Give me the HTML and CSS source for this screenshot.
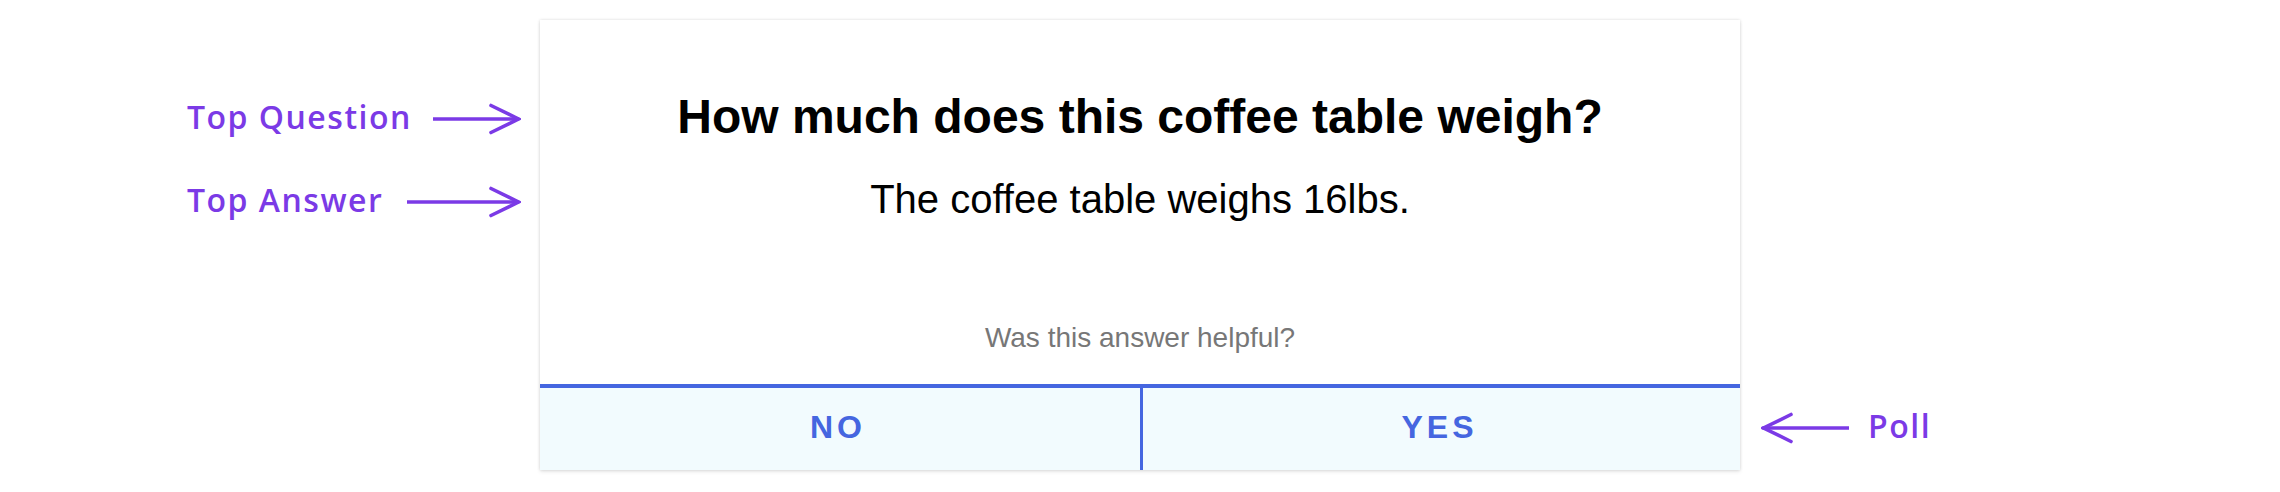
FILE: index.html
```html
<!DOCTYPE html>
<html lang="en">
<head>
<meta charset="utf-8">
<title>Top Question Poll</title>
<link rel="stylesheet" href="styles.css">
</head>
<body>
<div class="page">
  <div class="notes notes-left">
    <div class="note">
      <span class="note-text">Top Question</span>
      <svg class="arrow" width="88" height="32" viewBox="0 0 88 32" aria-hidden="true">
        <line x1="0" y1="16" x2="85" y2="16"/>
        <polyline points="58,2.5 85.5,16 58,29.5"/>
      </svg>
    </div>
    <div class="note">
      <span class="note-text">Top Answer</span>
      <svg class="arrow" width="114" height="32" viewBox="0 0 114 32" aria-hidden="true">
        <line x1="0" y1="16" x2="111" y2="16"/>
        <polyline points="84,2.5 111.5,16 84,29.5"/>
      </svg>
    </div>
  </div>

  <div class="card">
    <h1 class="question">How much does this coffee table weigh?</h1>
    <p class="answer">The coffee table weighs 16lbs.</p>
    <p class="prompt">Was this answer helpful?</p>
    <div class="poll">
      <button class="vote" type="button">NO</button>
      <button class="vote vote-yes" type="button">YES</button>
    </div>
  </div>

  <div class="notes notes-right">
    <div class="note note-poll">
      <svg class="arrow" width="88" height="32" viewBox="0 0 88 32" aria-hidden="true">
        <line x1="2" y1="16" x2="88" y2="16"/>
        <polyline points="30,2.5 2.5,16 30,29.5"/>
      </svg>
      <span class="note-text">Poll</span>
    </div>
  </div>
</div>
</body>
</html>
```

FILE: styles.css
```css
html, body {
  margin: 0;
  padding: 0;
  background: #ffffff;
}

.page {
  width: 2280px;
  height: 492px;
  display: flex;
  align-items: stretch;
  padding-top: 20px;
  box-sizing: border-box;
}

.notes {
  display: flex;
  flex-direction: column;
}

.notes-left {
  width: 540px;
  box-sizing: border-box;
  padding: 79px 19px 0 187px;
  gap: 43px;
}

.notes-right {
  padding: 388px 0 0 21px;
}

.note {
  height: 40px;
  display: flex;
  align-items: center;
  justify-content: space-between;
}

.note-poll {
  justify-content: flex-start;
  gap: 19px;
}

.note-text {
  font-family: "Open Sans", "Lato", sans-serif;
  font-weight: 600;
  font-size: 32px;
  line-height: 35px;
  letter-spacing: 1.5px;
  color: #7b3ae6;
  align-self: flex-start;
  white-space: nowrap;
}

.arrow {
  display: block;
  flex: none;
}

.arrow line,
.arrow polyline {
  fill: none;
  stroke: #7b3ae6;
  stroke-width: 3.6;
  stroke-linecap: round;
  stroke-linejoin: miter;
}

.card {
  width: 1200px;
  height: 450px;
  box-sizing: border-box;
  background: #ffffff;
  box-shadow: 0 0 3px rgba(0, 0, 0, 0.14), 0 2px 4px rgba(0, 0, 0, 0.08);
  display: flex;
  flex-direction: column;
  padding-top: 69px;
  font-family: "Liberation Sans", Arial, sans-serif;
  text-align: center;
}

.question {
  margin: 0;
  font-size: 48px;
  line-height: 56px;
  font-weight: 700;
  color: #000000;
}

.answer {
  margin: 30px 0 0;
  font-size: 40px;
  line-height: 48px;
  font-weight: 400;
  color: #000000;
}

.prompt {
  margin: 99px 0 0;
  font-size: 28px;
  line-height: 32px;
  color: #777777;
}

.poll {
  margin-top: auto;
  border-top: 4px solid #4566e0;
  display: grid;
  grid-template-columns: 1fr 1fr;
  height: 86px;
  box-sizing: border-box;
}

.vote {
  margin: 0;
  border: 0;
  background: #f2fbfe;
  padding: 0 4px 4px 0;
  font-family: "Liberation Sans", Arial, sans-serif;
  font-size: 32px;
  font-weight: 700;
  line-height: 78px;
  letter-spacing: 4px;
  color: #4566e0;
  text-align: center;
  cursor: pointer;
}

.vote-yes {
  border-left: 3px solid #4566e0;
}
```
